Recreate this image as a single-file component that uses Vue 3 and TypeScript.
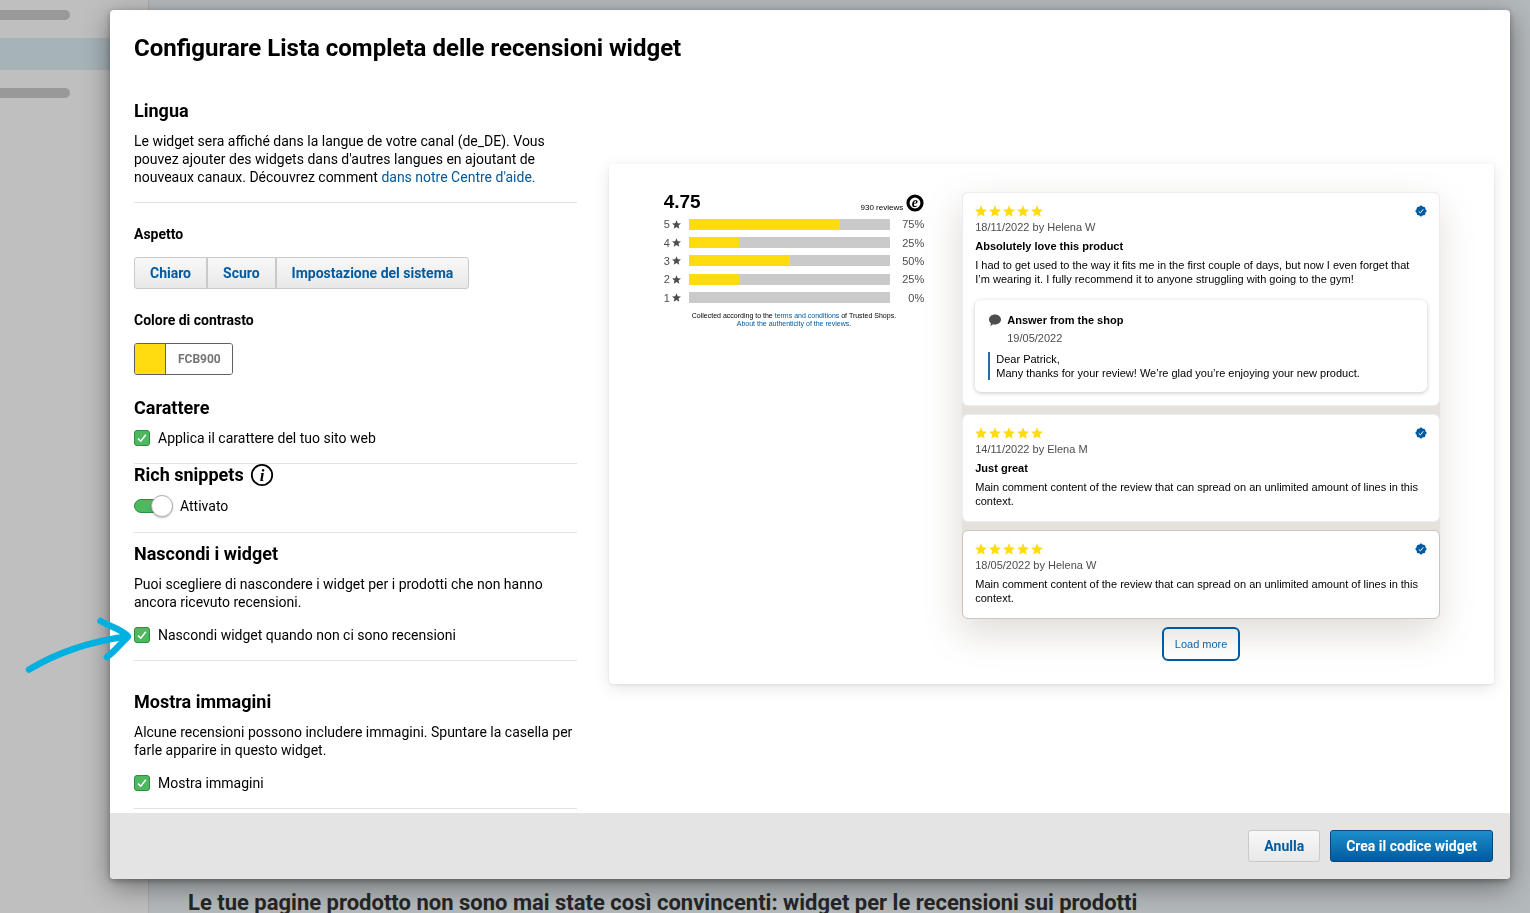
<script setup lang="ts">
import { ref } from 'vue'

interface Review {
  date: string
  author: string
  title?: string
  text: string
  answer?: { date: string; lines: string[] }
  outlined?: boolean
}

const looks = ['Chiaro', 'Scuro', 'Impostazione del sistema']
const accent = ref('FCB900')
const useSiteFont = ref(true)
const richSnippets = ref(true)
const hideEmpty = ref(true)
const showImages = ref(true)

const ratings = [
  { stars: 5, share: 75 },
  { stars: 4, share: 25 },
  { stars: 3, share: 50 },
  { stars: 2, share: 25 },
  { stars: 1, share: 0 },
]

const filler =
  'Main comment content of the review that can spread on an unlimited amount of lines in this context.'

const reviews: Review[] = [
  {
    date: '18/11/2022',
    author: 'Helena W',
    title: 'Absolutely love this product',
    text: 'I had to get used to the way it fits me in the first couple of days, but now I even forget that I’m wearing it. I fully recommend it to anyone struggling with going to the gym!',
    answer: {
      date: '19/05/2022',
      lines: [
        'Dear Patrick,',
        'Many thanks for your review! We’re glad you’re enjoying your new product.',
      ],
    },
  },
  { date: '14/11/2022', author: 'Elena M', title: 'Just great', text: filler },
  { date: '18/05/2022', author: 'Helena W', text: filler, outlined: true },
]

const starPath =
  'M12 17.27 18.18 21l-1.64-7.03L22 9.24l-7.19-.61L12 2 9.19 8.63 2 9.24l5.46 4.73L5.82 21z'
</script>

<template>
  <div class="page">
    <aside class="sidebar">
      <span class="stub"></span>
      <span class="current"></span>
      <span class="stub"></span>
    </aside>
    <main class="main">
      <h2 class="main-title">
        Le tue pagine prodotto non sono mai state così convincenti: widget per le recensioni sui prodotti
      </h2>
    </main>
  </div>

  <div class="overlay">
    <section class="modal" role="dialog" aria-labelledby="dialog-title">
      <div class="body">
        <h1 id="dialog-title">Configurare Lista completa delle recensioni widget</h1>
        <div class="columns">
          <form class="settings" @submit.prevent>
            <section class="block">
              <h2>Lingua</h2>
              <p>
                Le widget sera affiché dans la langue de votre canal (de_DE). Vous pouvez ajouter des
                widgets dans d'autres langues en ajoutant de nouveaux canaux. Découvrez comment
                <a href="#">dans notre Centre d'aide.</a>
              </p>
            </section>

            <section class="block look">
              <h3>Aspetto</h3>
              <div class="segments">
                <button v-for="look in looks" :key="look" type="button">{{ look }}</button>
              </div>
              <h3><label for="accent">Colore di contrasto</label></h3>
              <div class="color">
                <button type="button" class="swatch" aria-label="Colore di contrasto"></button>
                <input id="accent" v-model="accent" type="text" />
              </div>
              <h2>Carattere</h2>
              <label class="option">
                <span class="tick">
                  <input v-model="useSiteFont" type="checkbox" />
                  <svg v-if="useSiteFont" viewBox="0 0 16 16"><path d="M4 8.6 6.8 11.2 11.8 4.8" /></svg>
                </span>
                Applica il carattere del tuo sito web
              </label>
            </section>

            <section class="block snippets">
              <h2 class="with-icon">
                Rich snippets
                <svg class="info" viewBox="0 0 24 24" aria-hidden="true">
                  <circle cx="12" cy="12" r="10.2" />
                  <text x="12" y="17.6" text-anchor="middle">i</text>
                </svg>
              </h2>
              <label class="switch-row">
                <input v-model="richSnippets" type="checkbox" role="switch" class="switch" />
                Attivato
              </label>
            </section>

            <section class="block hide">
              <h2>Nascondi i widget</h2>
              <p>
                Puoi scegliere di nascondere i widget per i prodotti che non hanno ancora ricevuto
                recensioni.
              </p>
              <label class="option">
                <svg class="pointer" viewBox="0 0 110 60" aria-hidden="true">
                  <path d="M5 53.500C31 38 61 26 103 20.500" />
                  <path d="M76.500 5C87 11 99 13.500 104 20.500C97 27 91 35 83 41" />
                </svg>
                <span class="tick">
                  <input v-model="hideEmpty" type="checkbox" />
                  <svg v-if="hideEmpty" viewBox="0 0 16 16"><path d="M4 8.6 6.8 11.2 11.8 4.8" /></svg>
                </span>
                Nascondi widget quando non ci sono recensioni
              </label>
            </section>

            <section class="block images">
              <h2>Mostra immagini</h2>
              <p>
                Alcune recensioni possono includere immagini. Spuntare la casella per farle apparire in
                questo widget.
              </p>
              <label class="option">
                <span class="tick">
                  <input v-model="showImages" type="checkbox" />
                  <svg v-if="showImages" viewBox="0 0 16 16"><path d="M4 8.6 6.8 11.2 11.8 4.8" /></svg>
                </span>
                Mostra immagini
              </label>
            </section>
          </form>

          <div class="preview">
            <div class="summary">
              <div class="score">
                <strong>4.75</strong>
                <span>930 reviews</span>
                <svg class="seal" viewBox="0 0 18 18" aria-hidden="true">
                  <circle cx="9" cy="9" r="7" />
                  <text x="8.800" y="12.800" text-anchor="middle">e</text>
                </svg>
              </div>
              <div class="bars">
                <div v-for="r in ratings" :key="r.stars" class="bar-row">
                  <span class="count">{{ r.stars }}</span>
                  <svg class="mini-star" viewBox="2 2 20 19"><path :d="starPath" /></svg>
                  <span class="track"><span class="fill" :style="{ width: r.share + '%' }"></span></span>
                  <span class="share">{{ r.share }}%</span>
                </div>
              </div>
              <p class="note">
                Collected according to the <a href="#">terms and conditions</a> of Trusted Shops.<br />
                <a href="#">About the authenticity of the reviews</a>.
              </p>
            </div>

            <div class="reviews">
              <div class="cards">
                <article
                  v-for="review in reviews"
                  :key="review.date"
                  class="card"
                  :class="{ outlined: review.outlined }"
                >
                  <div class="card-top">
                    <span class="stars">
                      <svg v-for="n in 5" :key="n" viewBox="2 2 20 19"><path :d="starPath" /></svg>
                    </span>
                    <svg class="verified" viewBox="0 0 24 24" aria-hidden="true">
                      <rect x="3.500" y="3.500" width="17" height="17" rx="3" />
                      <rect x="3.500" y="3.500" width="17" height="17" rx="2" transform="rotate(45 12 12)" />
                      <path d="M7.500 12.800 10.800 15.800 16.500 8.500" />
                    </svg>
                  </div>
                  <div class="meta">{{ review.date }} by {{ review.author }}</div>
                  <h4 v-if="review.title">{{ review.title }}</h4>
                  <p>{{ review.text }}</p>
                  <div v-if="review.answer" class="answer">
                    <div class="answer-head">
                      <svg viewBox="0 0 12 12" aria-hidden="true">
                        <path
                          d="M6 .5C9.300.5 12 2.700 12 5.500S9.300 10.500 6 10.500C5.300 10.500 4.600 10.400 4 10.200C3.200 11 2.200 11.500 1 11.500C1.600 10.800 1.900 10 1.900 9.200C.7 8.300 0 7 0 5.500C0 2.700 2.700.5 6 .5Z"
                        />
                      </svg>
                      <h4>Answer from the shop</h4>
                    </div>
                    <div class="answer-date">{{ review.answer.date }}</div>
                    <blockquote>
                      <div v-for="line in review.answer.lines" :key="line">{{ line }}</div>
                    </blockquote>
                  </div>
                </article>
              </div>
              <button type="button" class="more">Load more</button>
            </div>
          </div>
        </div>
      </div>

      <footer class="footer">
        <button type="button" class="cancel">Anulla</button>
        <button type="button" class="create">Crea il codice widget</button>
      </footer>
    </section>
  </div>
</template>

<style>
body {
  margin: 0;
  overflow: hidden;
}
</style>

<style scoped>
* {
  box-sizing: border-box;
}

h1,
h2,
h3,
h4,
p,
blockquote {
  margin: 0;
}

button,
input {
  font-family: inherit;
  margin: 0;
}

a {
  color: #005aa0;
  text-decoration: none;
}

.page {
  display: flex;
  height: 100vh;
  overflow: hidden;
  font-family: Roboto, sans-serif;
  background: #b4b9bb;
}

.sidebar {
  width: 149px;
  flex: none;
  display: flex;
  flex-direction: column;
  gap: 18px;
  padding-top: 10px;
  background: #bfbfbf;
  border-right: 1px solid #a9adaf;
}

.stub {
  width: 70px;
  height: 10px;
  border-radius: 0 5px 5px 0;
  background: #999;
}

.current {
  height: 32px;
  background: #a6b3b9;
}

.main {
  flex: 1;
  min-width: 0;
  display: flex;
  flex-direction: column;
  justify-content: flex-end;
  padding-left: 39px;
}

.main-title {
  margin-bottom: -3px;
  font-size: 22px;
  line-height: 26px;
  color: #262626;
  white-space: nowrap;
}

.overlay {
  position: fixed;
  inset: 0;
  display: flex;
  padding: 10px 20px 34px 110px;
  font-family: Roboto, sans-serif;
  font-size: 14px;
  line-height: 18px;
  color: #000;
}

.modal {
  flex: 1;
  min-width: 0;
  display: flex;
  flex-direction: column;
  border-radius: 4px;
  background: #fff;
  box-shadow: 0 8px 28px rgba(0, 0, 0, 0.4), 0 2px 6px rgba(0, 0, 0, 0.3);
}

.body {
  flex: 1;
  min-height: 0;
  padding: 22px 16px 0 24px;
}

h1 {
  font-size: 24px;
  line-height: 32px;
}

.columns {
  display: grid;
  grid-template-columns: 1fr 2fr;
  gap: 32px;
  align-items: start;
  margin-top: 35px;
}

h2 {
  font-size: 18px;
  line-height: 24px;
}

h3 {
  font-size: 14px;
  line-height: 18px;
}

.block {
  padding-bottom: 16px;
  border-bottom: 1px solid #e2e2e2;
}

.block > p {
  margin-top: 9px;
}

.block > p + .option {
  margin-top: 15px;
}

.hide {
  padding-top: 9px;
}

.images {
  padding-top: 29px;
}

.look h3 {
  margin: 22px 0 14px;
}

.look h2 {
  margin: 21px 0 9px;
}

.segments {
  display: flex;
}

.segments button,
.cancel {
  height: 32px;
  padding: 0 15px;
  border: 1px solid #c9c9c9;
  background: linear-gradient(#f8f8f8, #e8e8e8);
  color: #005aa0;
  font-size: 14px;
  font-weight: 700;
}

.segments button:first-child {
  border-radius: 3px 0 0 3px;
}

.segments button:last-child {
  border-radius: 0 3px 3px 0;
}

.color {
  display: inline-flex;
  height: 32px;
  border: 1px solid #606060;
  border-radius: 3px;
  overflow: hidden;
  vertical-align: top;
}

.swatch {
  width: 31px;
  padding: 0;
  border: 0;
  border-right: 1px solid #606060;
  background: #ffdc0f;
}

.color input {
  width: 66px;
  padding: 0 0 0 12px;
  border: 0;
  background: #fff;
  color: #757575;
  font-size: 12px;
  font-weight: 700;
}

.option {
  position: relative;
  display: flex;
  align-items: center;
  gap: 8px;
}

.tick {
  display: grid;
  width: 16px;
  height: 16px;
}

.tick > * {
  grid-area: 1 / 1;
}

.tick input {
  appearance: none;
  width: 16px;
  height: 16px;
  border: 1px solid #2c8f3c;
  border-radius: 3px;
  background: #4db85f;
}

.tick svg {
  width: 16px;
  height: 16px;
  pointer-events: none;
  fill: none;
  stroke: #fff;
  stroke-width: 1.5;
}

.pointer {
  position: absolute;
  left: -110px;
  top: -10px;
  width: 110px;
  height: 60px;
  fill: none;
  stroke: #00b0e0;
  stroke-width: 6.5;
  stroke-linecap: round;
  stroke-linejoin: round;
}

.with-icon {
  display: flex;
  align-items: center;
  gap: 6px;
}

.snippets h2 {
  line-height: 22px;
}

.info {
  width: 24px;
  height: 24px;
}

.snippets .with-icon {
  height: 22px;
}

.info circle {
  fill: none;
  stroke: #000;
  stroke-width: 1.8;
}

.info text {
  font: italic 700 17px 'Liberation Serif', serif;
}

.switch-row {
  display: flex;
  align-items: center;
  gap: 8px;
  height: 20px;
  margin-top: 10px;
}

.switch {
  appearance: none;
  display: flex;
  align-items: center;
  justify-content: flex-end;
  width: 38px;
  height: 14px;
  border: 1px solid #2c8f3c;
  border-radius: 7px;
  background: #4db85f;
}

.switch::after {
  content: '';
  flex: none;
  width: 20px;
  height: 20px;
  margin-right: -2px;
  border: 1px solid #b0b0b0;
  border-radius: 50%;
  background: #fff;
  box-shadow: 0 1px 2px rgba(0, 0, 0, 0.25);
}

.preview {
  display: grid;
  grid-template-columns: 6fr 11fr;
  gap: 38px;
  margin-top: 65px;
  padding: 28px 54px 23px 55px;
  border-radius: 4px;
  background: #fff;
  box-shadow: 0 4px 16px rgba(0, 0, 0, 0.1), 0 1px 3px rgba(0, 0, 0, 0.08);
  font-family: 'Liberation Sans', Arial, sans-serif;
  font-size: 11px;
  line-height: 14px;
}

.score {
  display: flex;
  align-items: flex-end;
  height: 20px;
}

.score strong {
  flex: 1;
  font-size: 19px;
  line-height: 20px;
}

.score span {
  font-size: 8px;
  line-height: 8px;
}

.seal {
  width: 18px;
  height: 18px;
  margin-left: 3px;
}

.seal circle {
  fill: #fff;
  stroke: #000;
  stroke-width: 3.2;
}

.seal text {
  font: italic 700 14px 'Liberation Serif', serif;
}

.bars {
  display: grid;
  grid-template-rows: repeat(5, 1fr);
  height: 92px;
  margin-top: 3px;
  color: #4d4d4d;
}

.bar-row {
  display: flex;
  align-items: center;
}

.mini-star {
  width: 9px;
  height: 9px;
  margin: 0 8px 0 2px;
  fill: #4d4d4d;
}

.track {
  flex: 1;
  height: 11px;
  background: #cacaca;
}

.fill {
  display: block;
  height: 11px;
  border-radius: 2px;
  background: #ffdc0f;
}

.share {
  width: 34px;
  text-align: right;
}

.note {
  margin-top: 5px;
  font-size: 7px;
  line-height: 8px;
  text-align: center;
  white-space: nowrap;
}

.reviews {
  display: flex;
  flex-direction: column;
  align-items: center;
}

.cards {
  display: flex;
  flex-direction: column;
  gap: 8px;
  align-self: stretch;
  border-radius: 6px;
  background: #e5e1dd;
  box-shadow: -2px 14px 36px rgba(110, 90, 75, 0.22);
}

.card {
  padding: 11px 12px 13px;
  border: 1px solid #ededed;
  border-radius: 6px;
  background: #fff;
}

.card.outlined {
  border-color: #cbc5c2;
}

.card-top {
  display: flex;
  justify-content: space-between;
  align-items: center;
  height: 14px;
}

.stars {
  display: flex;
  gap: 2px;
}

.stars svg {
  width: 12px;
  height: 12px;
  fill: #ffdc0f;
}

.verified {
  width: 12px;
  height: 12px;
  fill: #005aa0;
}

.verified path {
  fill: none;
  stroke: #fff;
  stroke-width: 2;
}

.meta {
  margin-top: 2px;
  color: #4d4d4d;
}

h4 {
  font-size: 11px;
  line-height: 14px;
}

.card > h4,
.card > p {
  margin-top: 5px;
}

.answer {
  margin-top: 14px;
  padding: 13px 12px 12px;
  border-radius: 6px;
  background: #fff;
  box-shadow: 0 1px 4px rgba(0, 0, 0, 0.22);
}

.answer-head {
  display: flex;
  align-items: center;
  gap: 6px;
}

.answer-head svg {
  width: 12px;
  height: 12px;
  margin-left: 2px;
  fill: #4d4d4d;
}

.answer-date {
  margin: 4px 0 0 20px;
  color: #4d4d4d;
}

blockquote {
  margin-top: 7px;
  margin-left: 1px;
  padding-left: 6px;
  border-left: 2px solid #1f6fae;
}

.more {
  height: 34px;
  margin-top: 8px;
  padding: 0 11px;
  border: 2px solid #005aa0;
  border-radius: 6px;
  background: transparent;
  color: #1064a8;
  font-size: 11px;
}

.footer {
  display: flex;
  justify-content: flex-end;
  gap: 10px;
  padding: 17px;
  border-radius: 0 0 4px 4px;
  background: #e4e4e4;
}

.cancel {
  border-radius: 3px;
}

.create {
  height: 32px;
  padding: 0 15px;
  border: 1px solid #004a88;
  border-radius: 3px;
  background: linear-gradient(#1e8fcb, #005aa0);
  color: #fff;
  font-size: 14px;
  font-weight: 700;
}
</style>
